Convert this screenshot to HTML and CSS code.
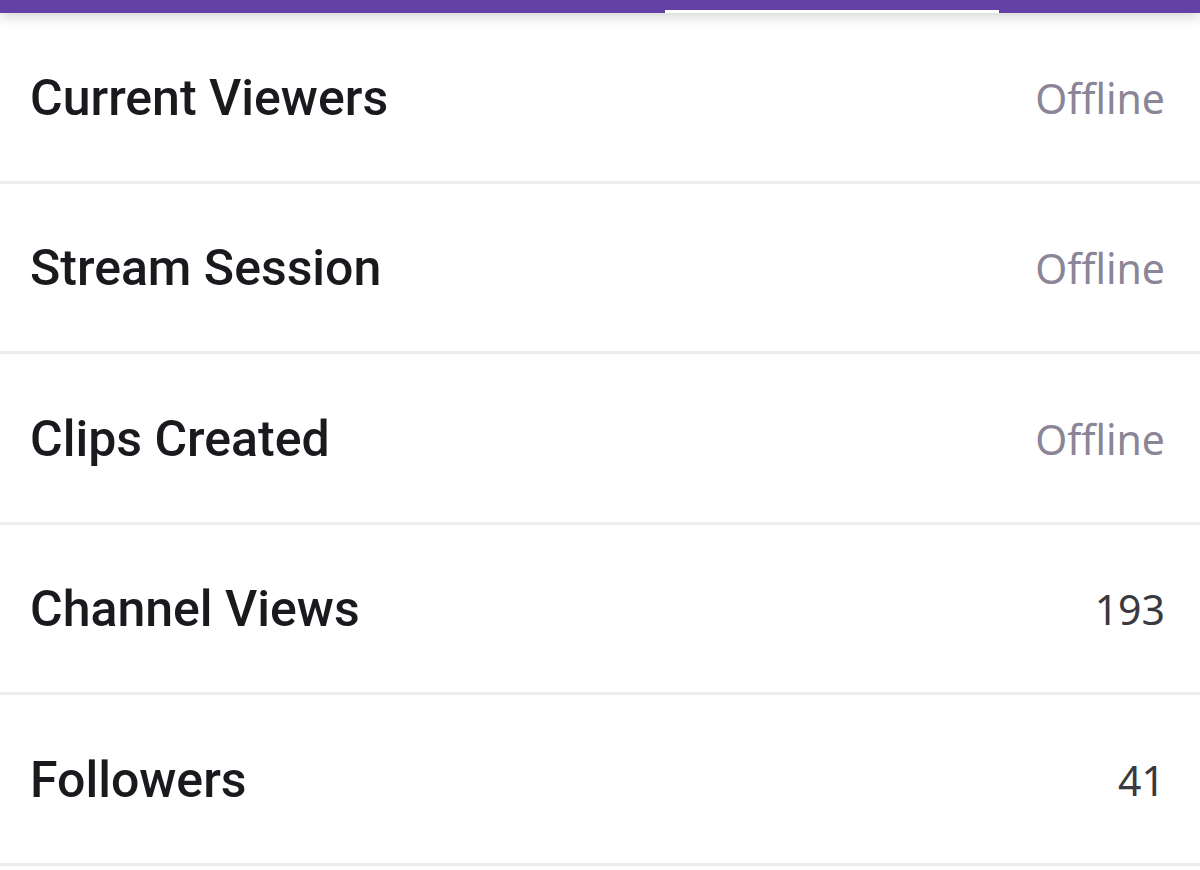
FILE: index.html
```html
<!DOCTYPE html>
<html lang="en">
<head>
<meta charset="utf-8">
<link rel="stylesheet" href="styles.css">
<title>Stats</title>
</head>
<body>
<header class="topbar">
  <div class="tabs">
    <div class="tab active"></div>
  </div>
</header>
<main class="stats">
  <div class="row"><span class="label">Current Viewers</span><span class="value muted">Offline</span></div>
  <div class="row"><span class="label">Stream Session</span><span class="value muted">Offline</span></div>
  <div class="row"><span class="label">Clips Created</span><span class="value muted">Offline</span></div>
  <div class="row"><span class="label">Channel Views</span><span class="value">193</span></div>
  <div class="row"><span class="label">Followers</span><span class="value">41</span></div>
</main>
</body>
</html>
```
FILE: styles.css
```css
html, body {
  margin: 0;
  padding: 0;
  background: #ffffff;
  font-family: Roboto, "Noto Sans", sans-serif;
  overflow: hidden;
}
.topbar {
  height: 13px;
  background: #6441a4;
  box-shadow: 0 2px 14px rgba(0, 0, 0, 0.22);
  position: relative;
  z-index: 2;
}
.tabs {
  display: flex;
  height: 100%;
  padding-left: 665px;
}
.tab.active {
  flex: 0 0 334px;
  align-self: flex-end;
  height: 3px;
  background: #ffffff;
}
.stats {
  display: flex;
  flex-direction: column;
}
.row {
  height: 167.5px;
  border-bottom: 3px solid #ededef;
  display: flex;
  align-items: center;
  justify-content: space-between;
  padding: 0 35px 0 30px;
}
.label {
  font-size: 50px;
  font-weight: 500;
  color: #1a191e;
  position: relative;
  top: 1px;
}
.value {
  font-family: "Noto Sans", Roboto, sans-serif;
  font-size: 41px;
  font-weight: 400;
  color: #3a3940;
  position: relative;
  top: 1px;
}
.value.muted {
  color: #8a8597;
}
```
